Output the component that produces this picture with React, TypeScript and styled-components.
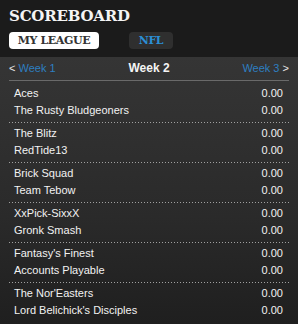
import React from "react";
import styled, { createGlobalStyle } from "styled-components";

const GlobalStyle = createGlobalStyle`
  html, body {
    margin: 0;
    padding: 0;
    background: #1c1c1c;
  }
`;

const Widget = styled.div`
  width: 298px;
  height: 324px;
  overflow: hidden;
  display: flex;
  flex-direction: column;
  font-family: "Liberation Sans", Arial, sans-serif;
  color: #f2f2f2;
`;

const Header = styled.div`
  background: #1b1b1b;
  padding: 7px 9px 8px;
  height: 57px;
  box-sizing: border-box;
`;

const Title = styled.h1`
  margin: 0;
  font-family: "DejaVu Serif", serif;
  font-weight: bold;
  font-size: 15px;
  line-height: 18px;
  color: #f4f4f4;
  letter-spacing: -0.2px;
`;

const Tabs = styled.div`
  display: flex;
  gap: 30px;
  margin-top: 7px;
`;

const Tab = styled.div<{ active?: boolean }>`
  height: 17px;
  width: ${(p) => (p.active ? "90px" : "44px")};
  border-radius: 4px;
  background: ${(p) => (p.active ? "#ffffff" : "#2f2f2f")};
  color: ${(p) => (p.active ? "#333333" : "#2b8fd6")};
  font-family: "DejaVu Serif", serif;
  font-weight: bold;
  font-size: 11px;
  letter-spacing: -0.4px;
  display: flex;
  align-items: center;
  justify-content: center;
`;

const Body = styled.div`
  flex: 1;
  background: linear-gradient(to bottom, #353535 0%, #2a2a2a 60%, #1f1f1f 100%);
  padding: 0 9px;
`;

const WeekNav = styled.div`
  display: flex;
  justify-content: space-between;
  align-items: center;
  padding: 2px 0 3px;
  line-height: 18px;
  font-size: 11px;
  border-bottom: 1px solid #6a6a6a;
`;

const WeekLink = styled.span`
  color: #2e7fc1;
`;

const Arrow = styled.span`
  color: #e8e8e8;
`;

const CurrentWeek = styled.span`
  font-weight: bold;
  font-size: 12px;
  color: #f4f4f4;
`;

const List = styled.div`
  margin-top: 1px;
`;

const Matchup = styled.div`
  padding: 2px 0 3px;
  &:first-child {
    padding-top: 3px;
  }
`;

const Row = styled.div`
  display: flex;
  justify-content: space-between;
  height: 17px;
  line-height: 17px;
  font-size: 11px;
  padding: 0 6px 0 5px;
`;

const Divider = styled.div`
  height: 1px;
  background: repeating-linear-gradient(to right, #a0a0a0 0 1px, transparent 1px 3px);
`;

const matchups: [string, string][] = [
  ["Aces", "The Rusty Bludgeoners"],
  ["The Blitz", "RedTide13"],
  ["Brick Squad", "Team Tebow"],
  ["XxPick-SixxX", "Gronk Smash"],
  ["Fantasy's Finest", "Accounts Playable"],
  ["The Nor'Easters", "Lord Belichick's Disciples"],
];

export default function App() {
  return (
    <Widget>
      <GlobalStyle />
      <Header>
        <Title>SCOREBOARD</Title>
        <Tabs>
          <Tab active>MY LEAGUE</Tab>
          <Tab>NFL</Tab>
        </Tabs>
      </Header>
      <Body>
        <WeekNav>
          <span>
            <Arrow>&lt;</Arrow> <WeekLink>Week 1</WeekLink>
          </span>
          <CurrentWeek>Week 2</CurrentWeek>
          <span>
            <WeekLink>Week 3</WeekLink> <Arrow>&gt;</Arrow>
          </span>
        </WeekNav>
        <List>
          {matchups.map(([a, b], i) => (
            <React.Fragment key={a}>
              <Matchup>
                <Row>
                  <span>{a}</span>
                  <span>0.00</span>
                </Row>
                <Row>
                  <span>{b}</span>
                  <span>0.00</span>
                </Row>
              </Matchup>
              {i < matchups.length - 1 && <Divider />}
            </React.Fragment>
          ))}
        </List>
      </Body>
    </Widget>
  );
}
